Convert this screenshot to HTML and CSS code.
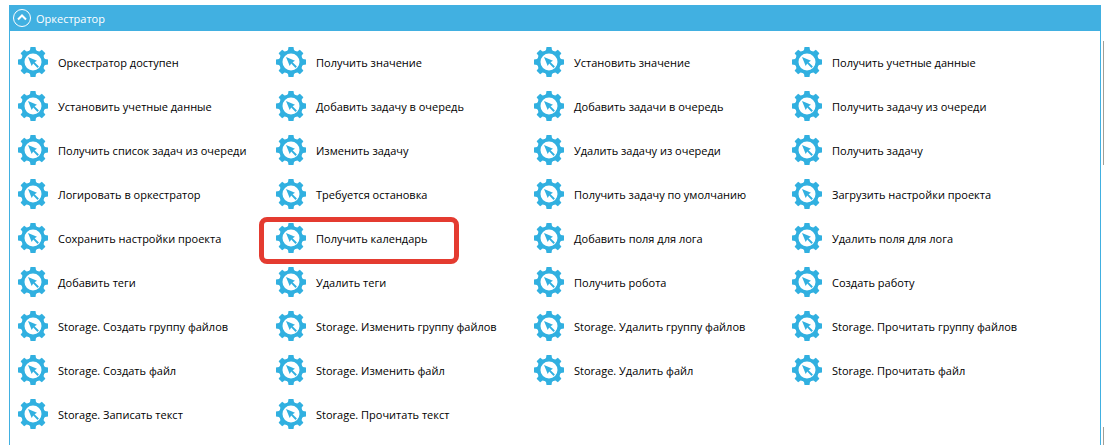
FILE: index.html
```html
<!DOCTYPE html>
<html lang="ru">
<head>
<meta charset="utf-8">
<title>Оркестратор</title>
<link rel="stylesheet" href="styles.css">
</head>
<body>
<svg class="defs" aria-hidden="true">
  <symbol id="gear" viewBox="0 0 30 30">
    <g fill="#31b0e0">
      <g id="teeth">
        <path id="tooth" d="M12.500 0h5l.5 3 2.500 2h-11l2.500-2z"/>
        <use href="#tooth" transform="rotate(45 15 15)"/>
        <use href="#tooth" transform="rotate(90 15 15)"/>
        <use href="#tooth" transform="rotate(135 15 15)"/>
      </g>
      <use href="#teeth" transform="rotate(180 15 15)"/>
    </g>
    <circle cx="15" cy="15" r="10" fill="#fff" stroke="#31b0e0" stroke-width="3"/>
    <path d="M10 10l9 3.700-2.400 1.500 4.300 4.300-1.400 1.400-4.300-4.300-1.500 2.400z" fill="#31b0e0"/>
  </symbol>
</svg>
<main class="page">
  <section class="panel">
    <h1 class="panel-header">
      <button class="toggle" type="button" aria-expanded="true" aria-controls="actions">
        <svg class="toggle-icon" viewBox="0 0 20 20" aria-hidden="true"><circle cx="10" cy="10" r="8.500"/><path class="chevron" d="M6 11.500l4-4 4 4"/></svg>
        <span class="label">Оркестратор</span>
      </button>
    </h1>
    <div class="actions" id="actions">
      <button class="action" type="button"><svg class="gear"><use href="#gear"/></svg><span class="label">Оркестратор доступен</span></button>
      <button class="action" type="button"><svg class="gear"><use href="#gear"/></svg><span class="label">Получить значение</span></button>
      <button class="action" type="button"><svg class="gear"><use href="#gear"/></svg><span class="label">Установить значение</span></button>
      <button class="action" type="button"><svg class="gear"><use href="#gear"/></svg><span class="label">Получить учетные данные</span></button>
      <button class="action" type="button"><svg class="gear"><use href="#gear"/></svg><span class="label">Установить учетные данные</span></button>
      <button class="action" type="button"><svg class="gear"><use href="#gear"/></svg><span class="label">Добавить задачу в очередь</span></button>
      <button class="action" type="button"><svg class="gear"><use href="#gear"/></svg><span class="label">Добавить задачи в очередь</span></button>
      <button class="action" type="button"><svg class="gear"><use href="#gear"/></svg><span class="label">Получить задачу из очереди</span></button>
      <button class="action" type="button"><svg class="gear"><use href="#gear"/></svg><span class="label">Получить список задач из очереди</span></button>
      <button class="action" type="button"><svg class="gear"><use href="#gear"/></svg><span class="label">Изменить задачу</span></button>
      <button class="action" type="button"><svg class="gear"><use href="#gear"/></svg><span class="label">Удалить задачу из очереди</span></button>
      <button class="action" type="button"><svg class="gear"><use href="#gear"/></svg><span class="label">Получить задачу</span></button>
      <button class="action" type="button"><svg class="gear"><use href="#gear"/></svg><span class="label">Логировать в оркестратор</span></button>
      <button class="action" type="button"><svg class="gear"><use href="#gear"/></svg><span class="label">Требуется остановка</span></button>
      <button class="action" type="button"><svg class="gear"><use href="#gear"/></svg><span class="label">Получить задачу по умолчанию</span></button>
      <button class="action" type="button"><svg class="gear"><use href="#gear"/></svg><span class="label">Загрузить настройки проекта</span></button>
      <button class="action" type="button"><svg class="gear"><use href="#gear"/></svg><span class="label">Сохранить настройки проекта</span></button>
      <button class="action highlighted" type="button"><svg class="gear"><use href="#gear"/></svg><span class="label">Получить календарь</span></button>
      <button class="action" type="button"><svg class="gear"><use href="#gear"/></svg><span class="label">Добавить поля для лога</span></button>
      <button class="action" type="button"><svg class="gear"><use href="#gear"/></svg><span class="label">Удалить поля для лога</span></button>
      <button class="action" type="button"><svg class="gear"><use href="#gear"/></svg><span class="label">Добавить теги</span></button>
      <button class="action" type="button"><svg class="gear"><use href="#gear"/></svg><span class="label">Удалить теги</span></button>
      <button class="action" type="button"><svg class="gear"><use href="#gear"/></svg><span class="label">Получить робота</span></button>
      <button class="action" type="button"><svg class="gear"><use href="#gear"/></svg><span class="label">Создать работу</span></button>
      <button class="action" type="button"><svg class="gear"><use href="#gear"/></svg><span class="label">Storage. Создать группу файлов</span></button>
      <button class="action" type="button"><svg class="gear"><use href="#gear"/></svg><span class="label">Storage. Изменить группу файлов</span></button>
      <button class="action" type="button"><svg class="gear"><use href="#gear"/></svg><span class="label">Storage. Удалить группу файлов</span></button>
      <button class="action" type="button"><svg class="gear"><use href="#gear"/></svg><span class="label">Storage. Прочитать группу файлов</span></button>
      <button class="action" type="button"><svg class="gear"><use href="#gear"/></svg><span class="label">Storage. Создать файл</span></button>
      <button class="action" type="button"><svg class="gear"><use href="#gear"/></svg><span class="label">Storage. Изменить файл</span></button>
      <button class="action" type="button"><svg class="gear"><use href="#gear"/></svg><span class="label">Storage. Удалить файл</span></button>
      <button class="action" type="button"><svg class="gear"><use href="#gear"/></svg><span class="label">Storage. Прочитать файл</span></button>
      <button class="action" type="button"><svg class="gear"><use href="#gear"/></svg><span class="label">Storage. Записать текст</span></button>
      <button class="action" type="button"><svg class="gear"><use href="#gear"/></svg><span class="label">Storage. Прочитать текст</span></button>
    </div>
  </section>
  <div class="rail" aria-hidden="true"><span class="rail-long"></span><span class="rail-short"></span></div>
</main>
</body>
</html>
```

FILE: styles.css
```css
* {
  box-sizing: border-box;
}

body {
  margin: 0;
  background: #fff;
  color: #000;
  font: 11px/16px "Open Sans", "Noto Sans", sans-serif;
}

button {
  margin: 0;
  padding: 0;
  border: 0;
  background: none;
  color: inherit;
  font: inherit;
  text-align: left;
  cursor: pointer;
}

.defs {
  position: absolute;
  width: 0;
  height: 0;
}

.page {
  display: flex;
  gap: 2px;
  padding: 5px 0 3px 9px;
}

.panel {
  flex: 1;
  border: solid #41b0e1;
  border-width: 0 1px;
}

.panel-header {
  margin: 0;
  background: #41b0e1;
  color: #fff;
  font: inherit;
}

.toggle {
  display: flex;
  align-items: center;
  gap: 4px;
  width: 100%;
  height: 26px;
  padding-left: 2px;
}

.label {
  padding-top: 2px;
}

.toggle-icon {
  width: 20px;
  height: 20px;
  fill: none;
  stroke: #fff;
}

.chevron {
  stroke-width: 2;
}

.actions {
  display: grid;
  grid-template-columns: repeat(auto-fill, 258px);
  grid-auto-rows: 44px;
  padding: 9px 0;
}

.action {
  position: relative;
  display: flex;
  align-items: center;
  gap: 10px;
  padding-left: 8px;
  white-space: nowrap;
}

.gear {
  flex: none;
  width: 30px;
  height: 30px;
}

.highlighted::after {
  content: "";
  position: absolute;
  inset: 1px 67px -4px -9px;
  border: 5px solid #e43b30;
  border-radius: 8px;
}

.rail {
  display: flex;
  flex-direction: column;
  justify-content: space-between;
  width: 1px;
  padding-top: 36px;
}

.rail-long,
.rail-short {
  height: 124px;
  background: #a09f97;
}

.rail-short {
  height: 18px;
}
```
